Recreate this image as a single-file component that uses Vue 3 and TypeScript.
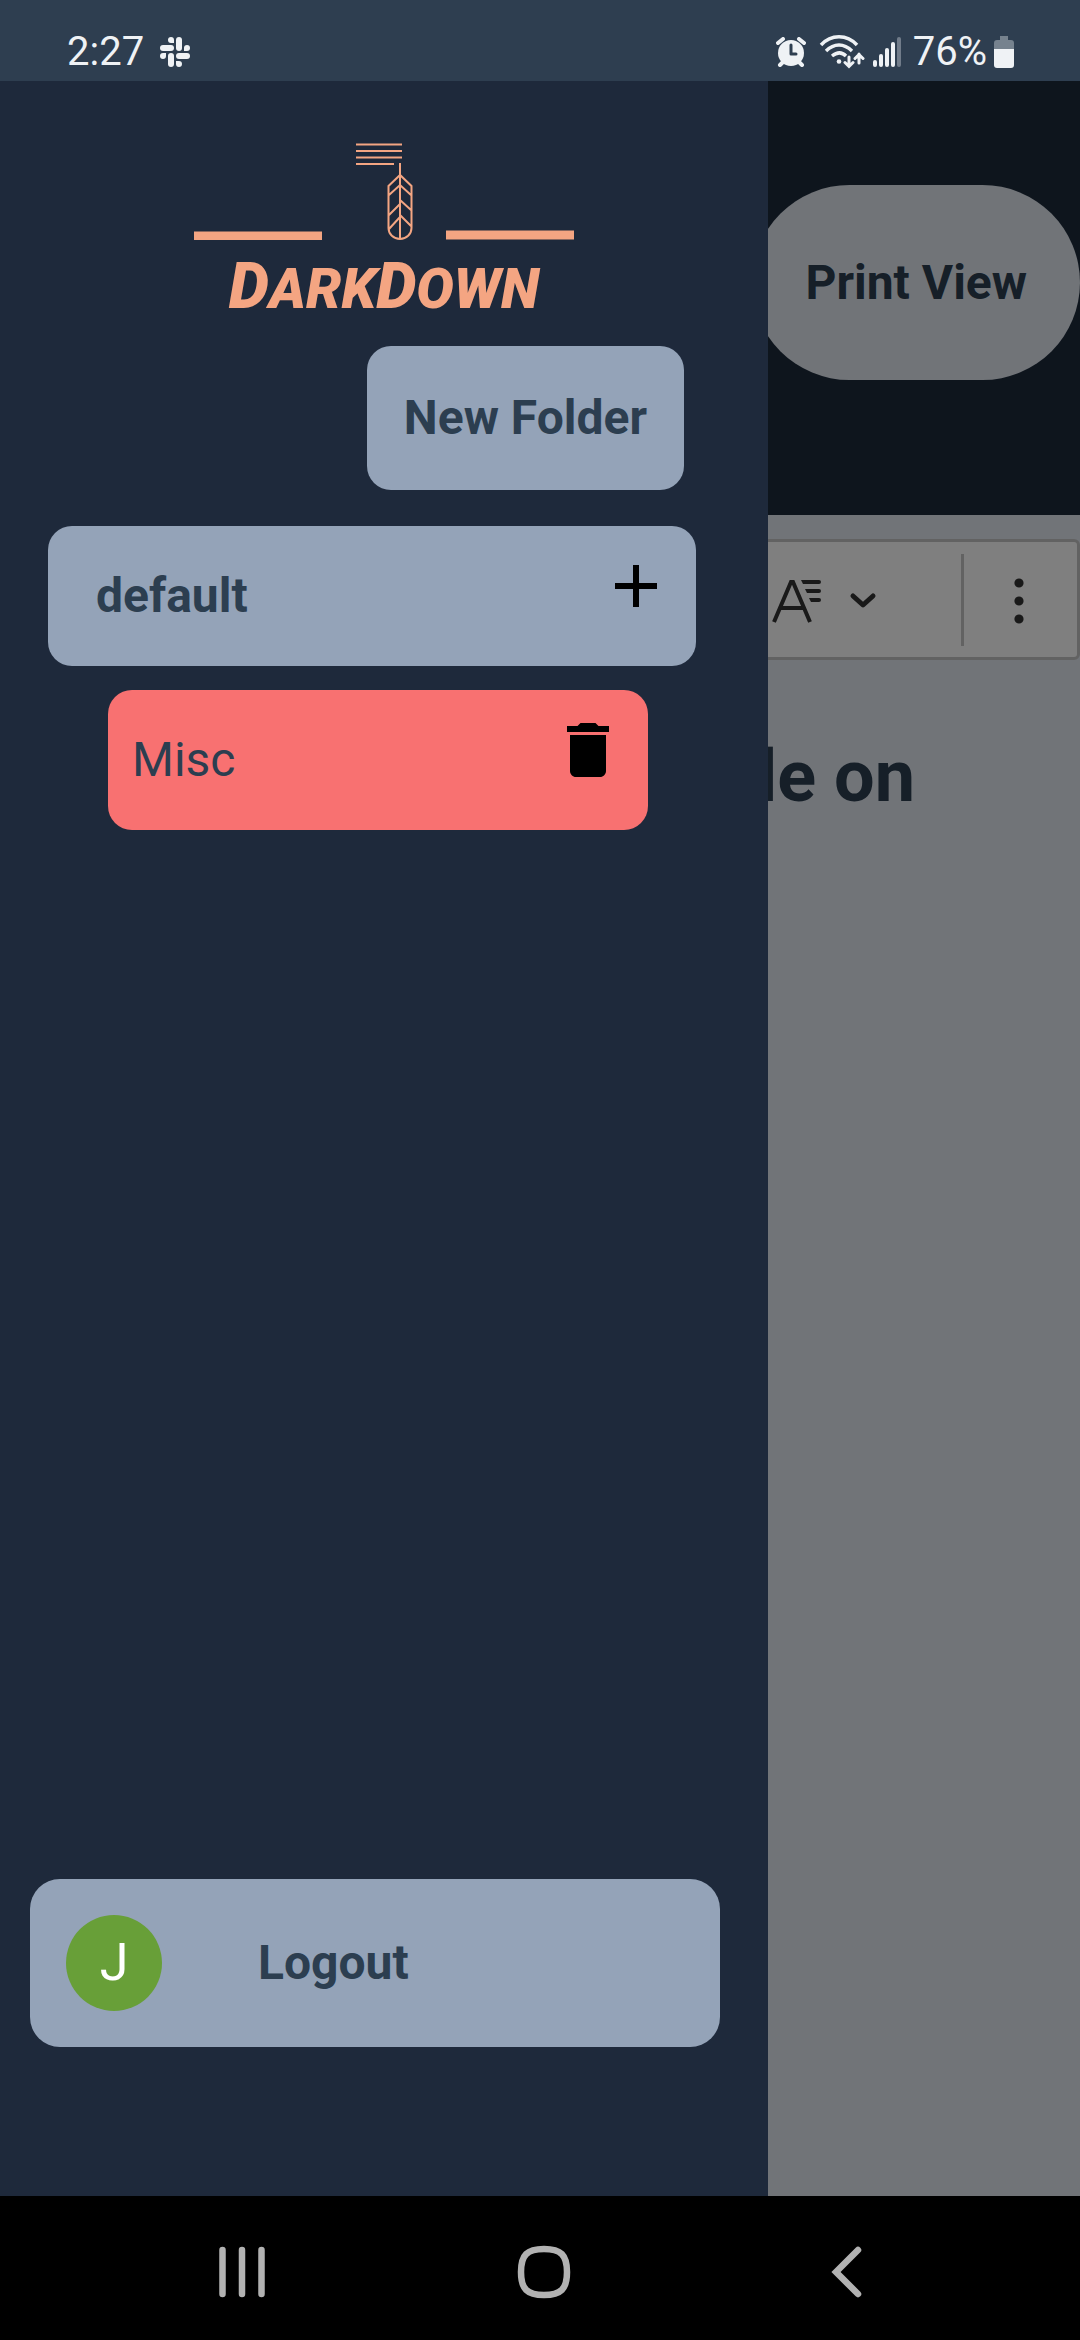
<script setup lang="ts">
import { ref } from 'vue'

interface Note {
  id: number
  title: string
}

interface Folder {
  id: number
  name: string
  notes: Note[]
}

const folders = ref<Folder[]>([
  { id: 1, name: 'default', notes: [{ id: 1, title: 'Misc' }] },
])

const signalBars = [
  { x: 1, y: 25, on: true },
  { x: 7, y: 19, on: true },
  { x: 13, y: 13, on: true },
  { x: 19, y: 7, on: true },
  { x: 25, y: 2, on: false },
]

function addNote(folder: Folder) {
  folder.notes.push({ id: Date.now(), title: 'Untitled' })
}

function removeNote(folder: Folder, note: Note) {
  folder.notes = folder.notes.filter((n) => n.id !== note.id)
}
</script>

<template>
  <div class="screen">
    <header class="status">
      <div class="status-group">
        <span>2:27</span>
        <svg width="30" height="30" viewBox="0 0 30 30" fill="currentColor" aria-hidden="true">
          <rect x="16" y="0" width="6" height="14" rx="3" />
          <rect x="0" y="8" width="14" height="6" rx="3" />
          <rect x="8" y="16" width="6" height="14" rx="3" />
          <rect x="16" y="16" width="14" height="6" rx="3" />
          <path d="M14 6h-3a3 3 0 1 1 3-3zM24 14v-3a3 3 0 1 1 3 3zM16 24h3a3 3 0 1 1-3 3zM6 16v3a3 3 0 1 1-3-3z" />
        </svg>
      </div>
      <div class="status-group right">
        <svg width="30" height="30" viewBox="0 0 30 30" aria-hidden="true">
          <circle cx="15" cy="16" r="13" fill="currentColor" />
          <path d="M2 6l5-4M28 6l-5-4M4 28l4-4M26 28l-4-4" stroke="currentColor" stroke-width="4" stroke-linecap="round" />
          <path d="M15 8v9h5" fill="none" stroke="#2e3e50" stroke-width="3" stroke-linecap="round" stroke-linejoin="round" />
        </svg>
        <svg class="wifi" width="46" height="34" viewBox="0 0 46 34" fill="none" stroke="currentColor" stroke-width="3.4" aria-hidden="true">
          <path d="M2 10C12-1 28-1 38 10M7 16C15 8 25 8 33 16M13 21C18 17 23 17 27 21" />
          <circle cx="20" cy="26.500" r="2.300" fill="currentColor" stroke="none" />
          <path d="M30 22v9M26 27.500l4 4 4-4M40 28V19M36 23.500l4-4 4 4" stroke-width="3" stroke-linecap="round" />
        </svg>
        <svg width="30" height="34" viewBox="0 0 30 34" aria-hidden="true">
          <rect
            v-for="bar in signalBars"
            :key="bar.x"
            :x="bar.x"
            :y="bar.y"
            width="4"
            :height="32 - bar.y"
            rx="2"
            fill="currentColor"
            :opacity="bar.on ? 1 : 0.35"
          />
        </svg>
        <span class="percent">76%</span>
        <svg width="20" height="32" viewBox="0 0 20 32" aria-hidden="true">
          <path d="M6 0h8v4h3a3 3 0 0 1 3 3v6H0V7a3 3 0 0 1 3-3h3z" fill="#76828e" />
          <path d="M0 13h20v16a3 3 0 0 1-3 3H3a3 3 0 0 1-3-3z" fill="currentColor" />
        </svg>
      </div>
    </header>

    <div class="stage">
      <main class="page">
        <div class="page-header">
          <button class="print" type="button">Print View</button>
        </div>
        <div class="toolbar" role="toolbar" aria-label="Editor toolbar">
          <button class="tool font" type="button" aria-label="Font size">
            <svg width="52" height="44" viewBox="0 0 52 44" fill="none" stroke="#333" stroke-width="4" aria-hidden="true">
              <path d="M3 43L20 3h2l17 40M10 29h24" />
              <path d="M30 1h18a2 2 0 0 1 0 4H32zM34 10h14a2 2 0 0 1 0 4H36zM38 19h10a2 2 0 0 1 0 4h-8z" fill="#333" stroke="none" />
            </svg>
            <svg width="28" height="18" viewBox="0 0 28 18" fill="none" stroke="#333" stroke-width="5" stroke-linecap="round" stroke-linejoin="round" aria-hidden="true">
              <path d="M4 4l10 9 10-9" />
            </svg>
          </button>
          <span class="divider"></span>
          <button class="tool" type="button" aria-label="Show more items">
            <svg width="12" height="48" viewBox="0 0 12 48" fill="#333" aria-hidden="true">
              <circle cx="6" cy="6" r="4.600" />
              <circle cx="6" cy="24" r="4.600" />
              <circle cx="6" cy="42" r="4.600" />
            </svg>
          </button>
        </div>
        <h2 class="note-heading">le on</h2>
        <div class="scrim"></div>
      </main>

      <aside class="drawer">
        <div class="logo">
          <svg width="380" height="98" viewBox="194 142 380 98" fill="none" stroke="#f4a582" aria-hidden="true">
            <path d="M194 236h128M446 235h128" stroke-width="9" />
            <path d="M356 144.500h46M356 151h46M356 157.500h46M356 164h38" stroke-width="2" />
            <path d="M400 163v75M400 175l-11.500 11v42a11.500 11 0 0 0 23 0v-42zM389 195l11-10 11 10M389 215l11-11M400 200l11 10M389 229l11-12M400 215l11 11" stroke-width="2" />
          </svg>
          <h1 class="wordmark"><b>D</b>ark<b>D</b>own</h1>
        </div>

        <button class="new-folder" type="button">New Folder</button>

        <section v-for="folder in folders" :key="folder.id" class="folder">
          <div class="row folder-row">
            <h2 class="folder-name">{{ folder.name }}</h2>
            <button class="icon-button" type="button" aria-label="Add note" @click="addNote(folder)">
              <svg width="72" height="72" viewBox="0 0 24 24" aria-hidden="true">
                <path d="M19 13h-6v6h-2v-6H5v-2h6V5h2v6h6v2z" />
              </svg>
            </button>
          </div>
          <div v-for="note in folder.notes" :key="note.id" class="row note-row">
            <span>{{ note.title }}</span>
            <button class="icon-button" type="button" aria-label="Delete note" @click="removeNote(folder, note)">
              <svg width="72" height="72" viewBox="0 0 24 24" aria-hidden="true">
                <path d="M6 19c0 1.100.9 2 2 2h8c1.100 0 2-.9 2-2V7H6v12zM19 4h-3.500l-1-1h-5l-1 1H5v2h14V4z" />
              </svg>
            </button>
          </div>
        </section>

        <button class="logout" type="button">
          <span class="avatar">J</span>
          <span>Logout</span>
        </button>
      </aside>
    </div>

    <nav class="system-nav" aria-label="System navigation">
      <button type="button" aria-label="Recent apps">
        <svg width="54" height="54" viewBox="0 0 54 54" fill="none" stroke="#b2b2b2" stroke-width="6.500" stroke-linecap="round">
          <path d="M7.500 5v44M27 5v44M46.500 5v44" />
        </svg>
      </button>
      <button type="button" aria-label="Home">
        <svg width="54" height="54" viewBox="0 0 54 54" fill="none" stroke="#b2b2b2" stroke-width="6.500">
          <path d="M27 4C44 4 50 10 50 27S44 50 27 50 4 44 4 27 10 4 27 4z" />
        </svg>
      </button>
      <button type="button" aria-label="Back">
        <svg width="54" height="54" viewBox="0 0 54 54" fill="none" stroke="#b2b2b2" stroke-width="6.500" stroke-linecap="round">
          <path d="M39 5L17 27l22 22" />
        </svg>
      </button>
    </nav>
  </div>
</template>

<style>
body {
  margin: 0;
  background: #000;
}
</style>

<style scoped>
* {
  box-sizing: border-box;
}

.screen {
  display: flex;
  flex-direction: column;
  min-height: 100vh;
  font-family: Roboto, "Liberation Sans", sans-serif;
  font-size: 48px;
  line-height: 72px;
  color: #2c3e50;
}

button {
  margin: 0;
  padding: 0;
  border: 0;
  background: none;
  font: inherit;
  color: inherit;
}

svg {
  display: block;
  flex: none;
}

h1,
h2 {
  margin: 0;
}

.status {
  display: flex;
  justify-content: space-between;
  padding: 28px 66px 5px 67px;
  background: #2e3e50;
  color: #eff2f5;
  font-size: 40px;
  line-height: 48px;
}

.status-group {
  display: flex;
  align-items: center;
  gap: 16px;
  height: 48px;
}

.status-group.right {
  gap: 7px;
}

.wifi {
  margin-left: 6px;
}

.percent {
  margin-left: 4px;
}

.stage {
  position: relative;
  display: flex;
  flex: 1;
}

.page {
  position: relative;
  flex: 1;
  overflow: hidden;
  background: #e2e8f0;
}

.scrim {
  position: absolute;
  inset: 0;
  background: rgba(0, 0, 0, 0.5);
}

.page-header {
  display: flex;
  justify-content: flex-end;
  padding: 104px 0 135px;
  background: #1c2a3b;
}

.print {
  height: 195px;
  padding: 0 53px;
  border-radius: 98px;
  background: #e2e8f0;
  font-weight: 700;
}

.toolbar {
  display: flex;
  align-items: center;
  justify-content: flex-end;
  height: 121px;
  margin-top: 24px;
  padding-right: 4px;
  border: 3px solid #c4c4c4;
  border-radius: 6px;
  background: #fff;
}

.tool {
  display: flex;
  align-items: center;
  justify-content: center;
  width: 109px;
  height: 92px;
  padding-top: 3px;
}

.tool.font {
  justify-content: flex-start;
  gap: 26px;
  width: 190px;
}

.divider {
  width: 3px;
  height: 92px;
  background: #c4c4c4;
}

.note-heading {
  padding: 69px 165px 0 0;
  font-size: 72px;
  line-height: 96px;
  text-align: right;
}

.drawer {
  position: absolute;
  top: 0;
  bottom: 0;
  left: 0;
  display: flex;
  flex-direction: column;
  width: 768px;
  max-width: 80%;
  padding: 61px 48px 149px 30px;
  background: #1e293b;
}

.logo {
  display: flex;
  flex-direction: column;
  align-items: center;
  padding-left: 18px;
}

.wordmark {
  height: 95px;
  margin-top: 11px;
  color: #f4a582;
  font-size: 56px;
  font-style: italic;
  font-weight: 900;
  line-height: 72px;
  text-transform: uppercase;
}

.wordmark b {
  font-size: 64px;
  font-weight: 900;
}

.new-folder {
  align-self: flex-end;
  margin-right: 36px;
  padding: 36px 37px;
  border-radius: 24px;
  background: #94a3b8;
  font-weight: 700;
}

.folder {
  display: flex;
  flex-direction: column;
  gap: 24px;
  margin: 36px 24px 0 18px;
}

.row {
  display: flex;
  align-items: center;
  justify-content: space-between;
  height: 140px;
  padding: 0 24px;
  border-radius: 24px;
}

.folder-row {
  padding-left: 48px;
  background: #94a3b8;
}

.note-row {
  margin: 0 48px 0 60px;
  background: #f87171;
}

.folder-name {
  font-size: 48px;
}

.icon-button {
  align-self: flex-start;
  padding-top: 24px;
}

.logout {
  display: flex;
  align-items: center;
  gap: 96px;
  margin-top: auto;
  padding: 36px;
  border-radius: 30px;
  background: #94a3b8;
  font-weight: 700;
}

.avatar {
  display: flex;
  align-items: center;
  justify-content: center;
  width: 96px;
  height: 96px;
  border-radius: 50%;
  background: #689f38;
  color: #fff;
  font-size: 52px;
  font-weight: 400;
}

.system-nav {
  display: flex;
  padding: 0 83px 0 91px;
  background: #000;
}

.system-nav button {
  display: flex;
  flex: 1;
  align-items: center;
  justify-content: center;
  height: 144px;
  padding-top: 8px;
}
</style>
